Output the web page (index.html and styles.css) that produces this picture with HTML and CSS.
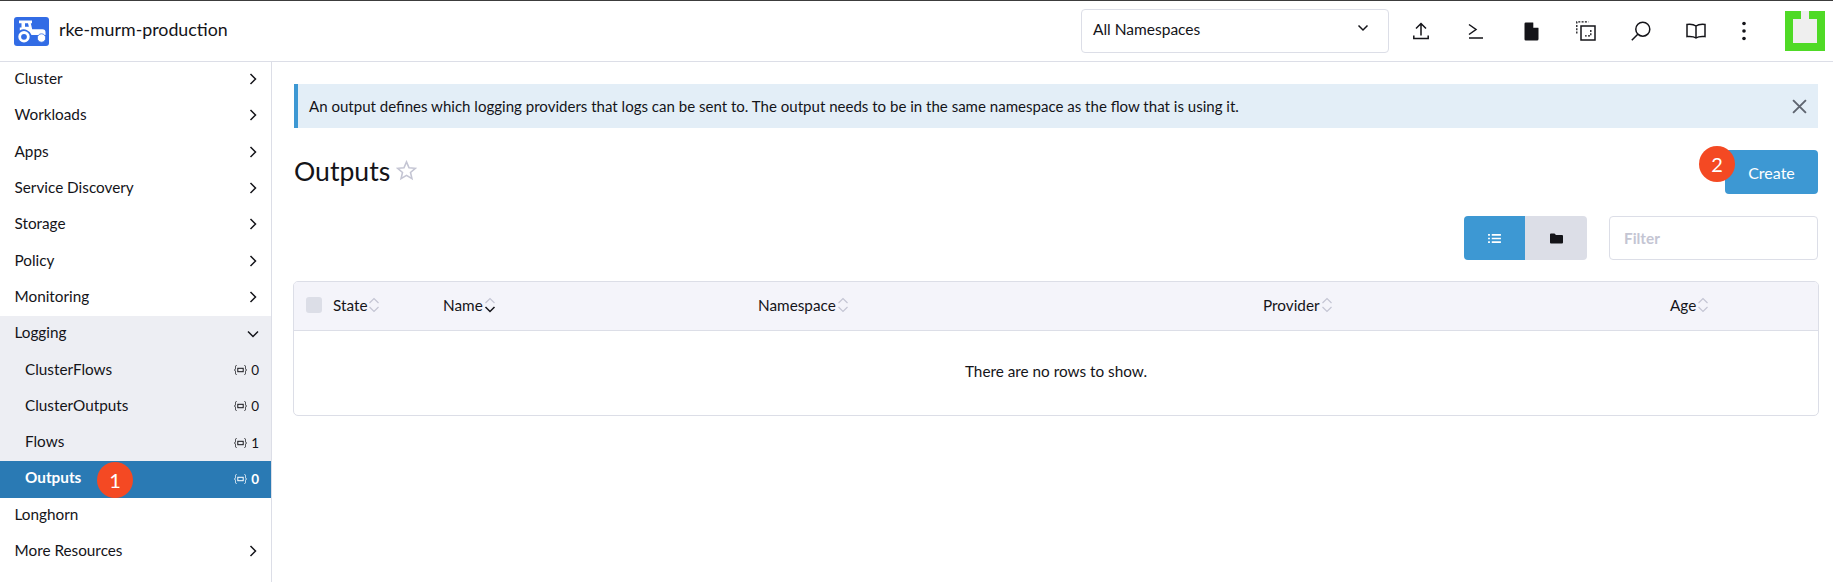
FILE: index.html
```html
<!DOCTYPE html>
<html lang="en">
<head>
<meta charset="utf-8">
<title>Outputs</title>
<link rel="stylesheet" href="styles.css">
</head>
<body>
<header class="topbar">
  <div class="brand">
    <svg class="logo" viewBox="0 0 35 29"><rect width="35" height="29" rx="3" fill="#326ce5"/><path d="M5 3.500h13v2.800h-1.200l1.400 6h10.300a3 3 0 0 1 3 3v2.700H17.500a8 8 0 0 0-11.700-4.500V10.500h1.700V6.300H5z" fill="#fff"/><circle cx="10" cy="19.800" r="4.300" fill="#326ce5" stroke="#fff" stroke-width="2.800"/><circle cx="27.500" cy="21" r="4.200" fill="#fff" stroke="#326ce5" stroke-width=".8"/><path d="M11 6.300h3l.9 3.500H11z" fill="#326ce5"/></svg>
    <span class="cluster-name">rke-murm-production</span>
  </div>
  <div class="ns-select"><span>All Namespaces</span>
    <svg class="ns-caret" viewBox="0 0 12 8"><path d="M1.500 1.500 6 6l4.500-4.500" fill="none" stroke="#141419" stroke-width="1.500"/></svg>
  </div>
  <div class="tools">
    <svg class="tool" viewBox="0 0 20 20"><path d="M10 14.500V2.500M5 7.500 10 2.500 15 7.500M2.800 14.500v3h14.400v-3" fill="none" stroke="#141419" stroke-width="1.500"/></svg>
    <svg class="tool" viewBox="0 0 20 20"><path d="M3 3.500 10 8.500 3 13.500M3 17h14" fill="none" stroke="#141419" stroke-width="1.500"/></svg>
    <svg class="tool" viewBox="-1 0 20 20"><path d="M3.800 1.500h7.700l5 5v11.500a1.500 1.500 0 0 1-1.500 1.500H3.800A1.300 1.300 0 0 1 2.500 18.200V2.800a1.300 1.300 0 0 1 1.300-1.300z" fill="#141419"/><path d="M11.300 1v5.700H17V5.500l-4.500-4.500z" fill="#fff"/></svg>
    <svg class="tool" viewBox="0 0 20 20"><path d="M.8 12.500V.8H12.500" fill="none" stroke="#141419" stroke-width="1.300" stroke-dasharray="2 1.300"/><rect x="5" y="5" width="14" height="14" fill="none" stroke="#141419" stroke-width="1.500"/><path d="M14.800 9v5.800H9" fill="none" stroke="#141419" stroke-width="1.300" stroke-dasharray="2 1.300"/></svg>
    <svg class="tool" viewBox="0 0 20 20"><circle cx="11.800" cy="8.200" r="7" fill="none" stroke="#141419" stroke-width="1.500"/><path d="M6.800 13.200 .8 19.200" stroke="#141419" stroke-width="1.500"/></svg>
    <svg class="tool" viewBox="0 0 20 16"><path d="M10 3C8 1.500 4.500 1 1 1.400v12.200c3.500-.4 7 0 9 1.400 2-1.400 5.500-1.800 9-1.400V1.400C15.500 1 12 1.500 10 3zM10 3v12" fill="none" stroke="#141419" stroke-width="1.500"/></svg>
    <svg class="tool dots" viewBox="0 0 6 20"><circle cx="3" cy="2.500" r="1.800" fill="#141419"/><circle cx="3" cy="10" r="1.800" fill="#141419"/><circle cx="3" cy="17.500" r="1.800" fill="#141419"/></svg>
  </div>
  <div class="avatar"><div class="avatar-inner"></div></div>
</header>
<div class="layout">
  <nav class="sidebar">
    <div class="nav-row"><span>Cluster</span><svg class="chev" viewBox="0 0 8 12"><path d="m1.500 1 5 5-5 5" fill="none" stroke="#141419" stroke-width="1.500"/></svg></div>
    <div class="nav-row"><span>Workloads</span><svg class="chev" viewBox="0 0 8 12"><path d="m1.500 1 5 5-5 5" fill="none" stroke="#141419" stroke-width="1.500"/></svg></div>
    <div class="nav-row"><span>Apps</span><svg class="chev" viewBox="0 0 8 12"><path d="m1.500 1 5 5-5 5" fill="none" stroke="#141419" stroke-width="1.500"/></svg></div>
    <div class="nav-row"><span>Service Discovery</span><svg class="chev" viewBox="0 0 8 12"><path d="m1.500 1 5 5-5 5" fill="none" stroke="#141419" stroke-width="1.500"/></svg></div>
    <div class="nav-row"><span>Storage</span><svg class="chev" viewBox="0 0 8 12"><path d="m1.500 1 5 5-5 5" fill="none" stroke="#141419" stroke-width="1.500"/></svg></div>
    <div class="nav-row"><span>Policy</span><svg class="chev" viewBox="0 0 8 12"><path d="m1.500 1 5 5-5 5" fill="none" stroke="#141419" stroke-width="1.500"/></svg></div>
    <div class="nav-row"><span>Monitoring</span><svg class="chev" viewBox="0 0 8 12"><path d="m1.500 1 5 5-5 5" fill="none" stroke="#141419" stroke-width="1.500"/></svg></div>
    <div class="nav-group">
      <div class="nav-row"><span>Logging</span><svg class="chev-down" viewBox="0 0 12 8"><path d="M1 1.500 6 6.500l5-5" fill="none" stroke="#141419" stroke-width="1.500"/></svg></div>
      <div class="nav-row sub"><span>ClusterFlows</span><span class="count"><svg class="ns-ico" viewBox="0 0 13 10"><path d="M2.500.5C1.500.5 1.500 1 1.500 2.500S1.500 4.500.5 5c1 .5 1 1 1 2.500s0 2 1 2M10.500.5c1 0 1 .5 1 2s0 2 1 2.500c-1 .5-1 1-1 2.500s0 2-1 2" fill="none" stroke="currentColor" stroke-width=".9"/><rect x="3.800" y="3.300" width="5.400" height="3.400" fill="none" stroke="currentColor" stroke-width="1"/></svg>0</span></div>
      <div class="nav-row sub"><span>ClusterOutputs</span><span class="count"><svg class="ns-ico" viewBox="0 0 13 10"><path d="M2.500.5C1.500.5 1.500 1 1.500 2.500S1.500 4.500.5 5c1 .5 1 1 1 2.500s0 2 1 2M10.500.5c1 0 1 .5 1 2s0 2 1 2.500c-1 .5-1 1-1 2.500s0 2-1 2" fill="none" stroke="currentColor" stroke-width=".9"/><rect x="3.800" y="3.300" width="5.400" height="3.400" fill="none" stroke="currentColor" stroke-width="1"/></svg>0</span></div>
      <div class="nav-row sub"><span>Flows</span><span class="count"><svg class="ns-ico" viewBox="0 0 13 10"><path d="M2.500.5C1.500.5 1.500 1 1.500 2.500S1.500 4.500.5 5c1 .5 1 1 1 2.500s0 2 1 2M10.500.5c1 0 1 .5 1 2s0 2 1 2.500c-1 .5-1 1-1 2.500s0 2-1 2" fill="none" stroke="currentColor" stroke-width=".9"/><rect x="3.800" y="3.300" width="5.400" height="3.400" fill="none" stroke="currentColor" stroke-width="1"/></svg>1</span></div>
      <div class="nav-row sub active"><span>Outputs</span><span class="count"><svg class="ns-ico" viewBox="0 0 13 10"><path d="M2.500.5C1.500.5 1.500 1 1.500 2.500S1.500 4.500.5 5c1 .5 1 1 1 2.500s0 2 1 2M10.500.5c1 0 1 .5 1 2s0 2 1 2.500c-1 .5-1 1-1 2.500s0 2-1 2" fill="none" stroke="currentColor" stroke-width=".9"/><rect x="3.800" y="3.300" width="5.400" height="3.400" fill="none" stroke="currentColor" stroke-width="1"/></svg>0</span><span class="badge badge-one">1</span></div>
    </div>
    <div class="nav-row"><span>Longhorn</span></div>
    <div class="nav-row"><span>More Resources</span><svg class="chev" viewBox="0 0 8 12"><path d="m1.500 1 5 5-5 5" fill="none" stroke="#141419" stroke-width="1.500"/></svg></div>
  </nav>
  <main class="content">
    <div class="banner"><span>An output defines which logging providers that logs can be sent to. The output needs to be in the same namespace as the flow that is using it.</span>
      <svg class="close" viewBox="0 0 14 14"><path d="m1 1 12 12M13 1 1 13" stroke="#5f6570" stroke-width="1.800"/></svg></div>
    <div class="title-row">
      <div class="title"><h1>Outputs</h1><svg class="star" viewBox="0 0 20 20"><path d="m10 1.800 2.400 5.600 6 .5-4.600 4 1.400 5.900-5.200-3.100-5.200 3.100 1.400-5.900-4.600-4 6-.5z" fill="none" stroke="#c4c5d3" stroke-width="1.500"/></svg></div>
      <button class="create">Create<span class="badge badge-two">2</span></button>
    </div>
    <div class="filters">
      <div class="toggle">
        <div class="tog tog-on"><svg viewBox="0 0 16 12" class="tog-ico"><path d="M5 2h10M5 6h10M5 10h10M1 2h2M1 6h2M1 10h2" stroke="#fff" stroke-width="1.900"/></svg></div>
        <div class="tog"><svg viewBox="0 0 14 11" class="tog-ico"><path d="M.5 1.500a1 1 0 0 1 1-1h3.500l1.500 1.500h6a1 1 0 0 1 1 1v6.500a1 1 0 0 1-1 1h-11a1 1 0 0 1-1-1z" fill="#141419"/></svg></div>
      </div>
      <div class="filter">Filter</div>
    </div>
    <div class="table">
      <div class="thead">
        <span class="check"></span>
        <span class="th">State<svg class="sort" viewBox="0 0 12 18"><path d="M1.500 7 6 2.500 10.500 7M1.500 11 6 15.500 10.500 11" fill="none" stroke="#c4c5d3" stroke-width="1.200"/></svg></span>
        <span class="th">Name<svg class="sort" viewBox="0 0 12 18"><path d="M1.500 7 6 2.500 10.500 7" fill="none" stroke="#c4c5d3" stroke-width="1.200"/><path d="M1.500 11 6 15.500 10.500 11" fill="none" stroke="#141419" stroke-width="1.500"/></svg></span>
        <span class="th">Namespace<svg class="sort" viewBox="0 0 12 18"><path d="M1.500 7 6 2.500 10.500 7M1.500 11 6 15.500 10.500 11" fill="none" stroke="#c4c5d3" stroke-width="1.200"/></svg></span>
        <span class="th">Provider<svg class="sort" viewBox="0 0 12 18"><path d="M1.500 7 6 2.500 10.500 7M1.500 11 6 15.500 10.500 11" fill="none" stroke="#c4c5d3" stroke-width="1.200"/></svg></span>
        <span class="th">Age<svg class="sort" viewBox="0 0 12 18"><path d="M1.500 7 6 2.500 10.500 7M1.500 11 6 15.500 10.500 11" fill="none" stroke="#c4c5d3" stroke-width="1.200"/></svg></span>
      </div>
      <div class="tbody"><span>There are no rows to show.</span></div>
    </div>
  </main>
</div>
</body>
</html>
```
FILE: styles.css
```css
* { box-sizing: border-box; }
html, body { margin: 0; height: 100%; }
body { font-family: Lato, "Open Sans", sans-serif; font-size: 15.3px; color: #141419; background: #fff; overflow: hidden; height: 582px; display: flex; flex-direction: column; }
.topbar { height: 62px; flex: none; border-top: 1px solid #3c3c3c; border-bottom: 1px solid #dcdee7; display: flex; align-items: center; }
.brand { display: flex; align-items: center; width: 1081px; padding-left: 14px; padding-bottom: 2px; gap: 10px; }
.logo { width: 35px; height: 29px; margin-top: 2px; }
.cluster-name { font-size: 17.8px; margin-bottom: 2px; }
.ns-select { width: 308px; height: 44px; border: 1px solid #dcdee7; border-radius: 4px; display: flex; align-items: center; justify-content: space-between; padding: 0 19px 3px 11px; font-size: 15.5px; margin-top: -1px; }
.ns-caret { width: 12px; height: 8px; margin-top: -3px; }
.tools { display: flex; align-items: center; margin-left: 22px; gap: 35px; width: 374px; }
.tool { width: 20px; height: 20px; }
.dots { width: 6px; }
.avatar { width: 40px; height: 40px; background: #4fda26; display: flex; justify-content: center; position: relative; }
.avatar-inner { width: 24px; height: 24px; margin-top: 8px; background: #efefef; }
.avatar::before { content: ""; position: absolute; left: 16px; top: 0; width: 8px; height: 8px; background: #efefef; }
.layout { flex: 1; display: flex; min-height: 0; }
.sidebar { width: 272px; flex: none; border-right: 1px solid #dcdee7; }
.nav-row { height: 36.3px; display: flex; align-items: center; justify-content: space-between; padding: 0 14px 4px 14.5px; position: relative; }
.nav-group { background: #edeef3; }
.sub { padding-left: 25px; padding-right: 12px; }
.count { font-size: 13.5px; display: flex; align-items: center; gap: 4px; padding-top: 3px; }
.ns-ico { width: 13px; height: 10px; }
.chev { width: 8px; height: 12px; margin-top: 2px; }
.chev-down { width: 12px; height: 8px; margin-right: -2px; margin-top: 3px; }
.active { background: #2a7ab4; color: #fff; font-weight: 700; }
.badge { position: absolute; width: 36px; height: 36px; border-radius: 50%; background: #f44923; color: #fff; font-size: 20px; font-weight: 400; display: flex; align-items: center; justify-content: center; }
.badge-one { left: 97px; top: 1px; }
.badge-two { left: -26px; top: -4px; }
.content { flex: 1; min-width: 0; padding: 22px 15px 0 22px; }
.banner { height: 44px; background: #e3eef7; border-left: 4px solid #3d98d3; display: flex; align-items: center; justify-content: space-between; padding: 0 11px 0 11px; font-size: 15.05px; }
.close { width: 15px; height: 15px; }
.title-row { display: flex; justify-content: space-between; align-items: flex-start; margin-top: 22px; height: 44px; }
.title { display: flex; align-items: center; gap: 6px; height: 42px; }
h1 { font-size: 26.6px; font-weight: 400; margin: 0; }
.star { width: 21px; height: 21px; margin-top: -2px; }
.create { position: relative; width: 93px; height: 44px; background: #3d98d3; color: #fff; border: 0; border-radius: 4px; font: 16px Lato, sans-serif; }
.filters { display: flex; justify-content: flex-end; gap: 22px; margin-top: 22px; }
.toggle { display: flex; border-radius: 4px; overflow: hidden; height: 44px; }
.tog { width: 62px; background: #dcdee7; display: flex; align-items: center; justify-content: center; }
.tog-on { width: 61px; background: #3d98d3; }
.tog-ico { width: 15px; height: 11px; }
.filter { width: 209px; height: 44px; border: 1px solid #dcdee7; border-radius: 4px; color: #c4c5d3; display: flex; align-items: center; padding-left: 14px; font-weight: 700; }
.table { margin-top: 21px; border: 1px solid #dcdee7; border-radius: 5px; overflow: hidden; margin-left: -1px; margin-right: -1px; }
.thead { height: 49px; background: #f4f4fa; border-bottom: 1px solid #dcdee7; display: grid; grid-template-columns: 27px 110px 315px 505px 407px 1fr; align-items: center; padding: 0 0 3px 12px; }
.check { width: 16px; height: 16px; background: #dcdee7; border-radius: 3px; }
.th { display: flex; align-items: center; gap: 1px; }
.sort { width: 12px; height: 18px; }
.tbody { height: 84px; display: flex; align-items: center; justify-content: center; padding-bottom: 5px; }
```
